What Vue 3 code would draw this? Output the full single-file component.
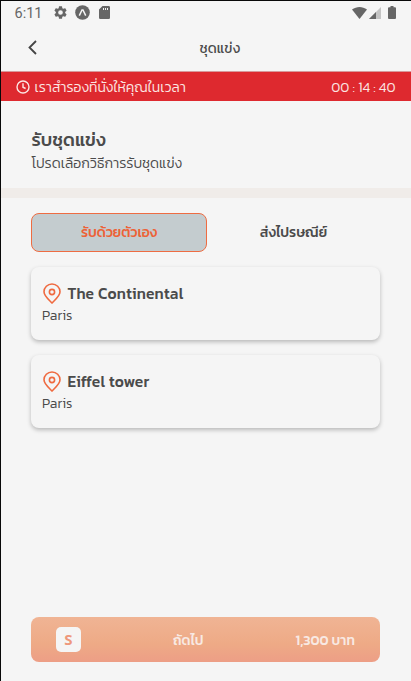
<script setup>
import { ref } from 'vue';

const timer = ref('00 : 14 : 40');
const selected = ref('pickup');
const places = ref([
  { id: 1, name: 'The Continental', city: 'Paris' },
  { id: 2, name: 'Eiffel tower', city: 'Paris' }
]);
</script>

<template>
  <main class="screen">
    <div class="status">
      <span class="clock">6:11</span>
      <svg class="gear" width="13" height="13" viewBox="2 2 20 20">
        <path
          fill="#666"
          fill-rule="evenodd"
          d="M19.14 12.94c.04-.3.06-.61.06-.94s-.02-.64-.07-.94l2.03-1.58a.49.49 0 0 0 .12-.61l-1.92-3.32a.49.49 0 0 0-.59-.22l-2.39.96a7 7 0 0 0-1.62-.94l-.36-2.54a.48.48 0 0 0-.48-.41h-3.84a.47.47 0 0 0-.47.41l-.36 2.54c-.59.24-1.13.57-1.62.94l-2.39-.96a.48.48 0 0 0-.59.22L2.74 8.87a.47.47 0 0 0 .12.61l2.03 1.58a6 6 0 0 0 0 1.88l-2.03 1.58a.49.49 0 0 0-.12.61l1.92 3.32c.12.22.37.29.59.22l2.39-.96c.5.38 1.03.7 1.62.94l.36 2.54c.05.24.24.41.48.41h3.84c.24 0 .44-.17.47-.41l.36-2.54c.59-.24 1.13-.56 1.62-.94l2.39.96c.22.08.47 0 .59-.22l1.92-3.32a.47.47 0 0 0-.12-.61zM12 15.6a3.6 3.6 0 1 1 0-7.2 3.6 3.6 0 0 1 0 7.2z"
        />
      </svg>
      <svg class="expo" width="15" height="15" viewBox="0 0 15 15">
        <circle cx="7.5" cy="7.5" r="7.3" fill="#666" />
        <path d="M4.3 10.6 7 5h1l2.7 5.6" fill="none" stroke="#f5f5f5" stroke-width="1.5" />
      </svg>
      <svg class="sd" width="11" height="13" viewBox="0 0 11 13">
        <path
          fill="#666"
          fill-rule="evenodd"
          d="M3.500 0h6.200A1.3 1.3 0 0 1 11 1.3v10.4A1.3 1.3 0 0 1 9.7 13H1.3A1.3 1.3 0 0 1 0 11.700V3.500zM4 2v2h1V2zM6 2v2h1V2zM8 2v2h1V2z"
        />
      </svg>
      <svg class="wifi" width="15" height="12" viewBox="0 0 15 12">
        <path fill="#666" d="M0 2.600C4.500-.8 10.500-.8 15 2.600L7.500 12z" />
      </svg>
      <svg class="signal" width="12" height="12" viewBox="0 0 12 12">
        <path fill="#c4c4c4" d="M12 0v12H0z" />
        <path fill="#666" d="M7 5v7H0z" />
      </svg>
      <svg class="battery" width="8" height="13" viewBox="0 0 8 13">
        <path fill="#666" d="M2.500 0h3v1.200H7q1 0 1 1V12q0 1-1 1H1q-1 0-1-1V2.200q0-1 1-1h1.500z" />
      </svg>
    </div>

    <header>
      <svg class="back" width="9" height="15" viewBox="0 0 9 15">
        <path d="M8 1 1.500 7.500 8 14" fill="none" stroke="#444" stroke-width="1.800" />
      </svg>
      <h1>ชุดแข่ง</h1>
    </header>

    <div class="reserve">
      <svg width="14" height="14" viewBox="0 0 14 14">
        <circle cx="7" cy="7" r="6" />
        <path d="M7 3.300V7.200l2.600 1.300" />
      </svg>
      <span class="reserve-text">เราสำรองที่นั่งให้คุณในเวลา</span>
      <span class="timer">{{ timer }}</span>
    </div>

    <section class="intro">
      <h2>รับชุดแข่ง</h2>
      <p>โปรดเลือกวิธีการรับชุดแข่ง</p>
    </section>

    <section class="content">
      <div class="tabs">
        <button :class="{ active: selected === 'pickup' }" @click="selected = 'pickup'">
          รับด้วยตัวเอง
        </button>
        <button :class="{ active: selected === 'post' }" @click="selected = 'post'">
          ส่งไปรษณีย์
        </button>
      </div>

      <div v-for="place in places" :key="place.id" class="card">
        <div class="name">
          <svg width="18" height="21" viewBox="0 0 18 21">
            <path d="M9 20C6 16.800 1 13 1 8.800a8 7.800 0 0 1 16 0C17 13 12 16.800 9 20z" />
            <circle cx="9" cy="9" r="2.600" />
          </svg>
          <h3>{{ place.name }}</h3>
        </div>
        <p>{{ place.city }}</p>
      </div>
    </section>

    <button class="next">
      <span class="size">S</span>
      <span class="next-text">ถัดไป</span>
      <span class="price">1,300 บาท</span>
    </button>
  </main>
</template>

<style>
body {
  background: #f5f5f5;
}
</style>

<style scoped>
.screen {
  box-sizing: border-box;
  height: 681px;
  border-top: 1px solid #080808;
  border-left: 1px solid #080808;
  background: #f5f5f5;
  color: #4b4b4b;
  font-family: Kanit, 'Noto Sans', 'Noto Sans Thai', sans-serif;
  display: flex;
  flex-direction: column;
  overflow: hidden;
  white-space: nowrap;
}

h1,
h2,
h3,
p {
  margin: 0;
}

svg {
  display: block;
  flex-shrink: 0;
}

button {
  font: inherit;
  color: inherit;
  border: none;
  background: none;
  padding: 0;
  cursor: pointer;
}

.status {
  height: 23px;
  display: flex;
  align-items: center;
  padding: 0 15px 0 13.5px;
}

.clock {
  width: 39.5px;
  padding-top: 1px;
  font: 14.5px Roboto, sans-serif;
  color: #666;
}

.expo {
  margin-left: 8px;
}

.sd {
  margin-left: 9px;
}

.wifi {
  margin-left: auto;
}

.signal {
  margin-left: 2px;
}

.battery {
  margin-left: 7px;
}

header {
  height: 47px;
  display: flex;
  align-items: center;
  padding-left: 27px;
}

header h1 {
  flex: 1;
  padding: 2px 8px 0 0;
  font-size: 14px;
  font-weight: 400;
  text-align: center;
}

.reserve {
  height: 29px;
  display: flex;
  align-items: center;
  padding: 0 15.5px 0 14.5px;
  border-top: 1px solid #d79a9c;
  background: #de292f;
  color: #fce6e3;
  font-size: 14px;
  font-weight: 300;
}

.reserve svg {
  fill: none;
  stroke: #fce6e3;
  stroke-width: 1.4;
  margin-right: 5px;
}

.reserve-text,
.timer {
  padding-top: 1px;
}

.timer {
  margin-left: auto;
}

.intro {
  box-sizing: border-box;
  height: 97px;
  padding: 25px 30px 0 30.5px;
  border-bottom: 10px solid #f0ece9;
}

.intro h2 {
  font-size: 18.2px;
  line-height: 28px;
  font-weight: 500;
}

.intro p {
  font-size: 14.1px;
  line-height: 18px;
  font-weight: 300;
}

.content {
  padding: 15px 31px 0 30px;
}

.tabs {
  display: flex;
  height: 39px;
  margin-bottom: 15px;
  font-size: 14px;
  font-weight: 500;
}

.tabs button {
  box-sizing: border-box;
  flex: 1;
  border-radius: 8px;
}

.tabs .active {
  flex: 0 0 176px;
  border: 1px solid #ee6c42;
  background: #c4cccf;
  color: #ed6237;
}

.card {
  box-sizing: border-box;
  height: 73px;
  margin-bottom: 15px;
  padding: 15px 11px 0;
  border-radius: 8px;
  background: #f5f5f5;
  box-shadow: 0 2px 4px rgba(0, 0, 0, 0.25);
}

.name {
  display: flex;
  align-items: center;
  height: 23px;
  padding-left: 1px;
}

.name svg {
  fill: none;
  stroke: #ef6a40;
  stroke-width: 1.6;
}

.card h3 {
  margin-left: 6.5px;
  padding-top: 1px;
  font-size: 15.5px;
  line-height: 22px;
  font-weight: 500;
  letter-spacing: 0.25px;
}

.card p {
  font-size: 14px;
  line-height: 22px;
  font-weight: 300;
}

.next {
  display: flex;
  align-items: center;
  height: 45px;
  margin: auto 31px 19px 30px;
  padding: 0 25px;
  border-radius: 8px;
  background: linear-gradient(#f0b494, #eeaa86 60%, #ed9e86);
  color: #f8e9e3;
  font-size: 13.8px;
  font-weight: 500;
}

.size {
  width: 25px;
  height: 25px;
  border-radius: 5px;
  background: #f5f5f5;
  color: #ee987c;
  font: 700 15px/25px 'Noto Sans', sans-serif;
}

.next-text {
  margin-left: 92px;
}

.price {
  margin-left: auto;
}
</style>
